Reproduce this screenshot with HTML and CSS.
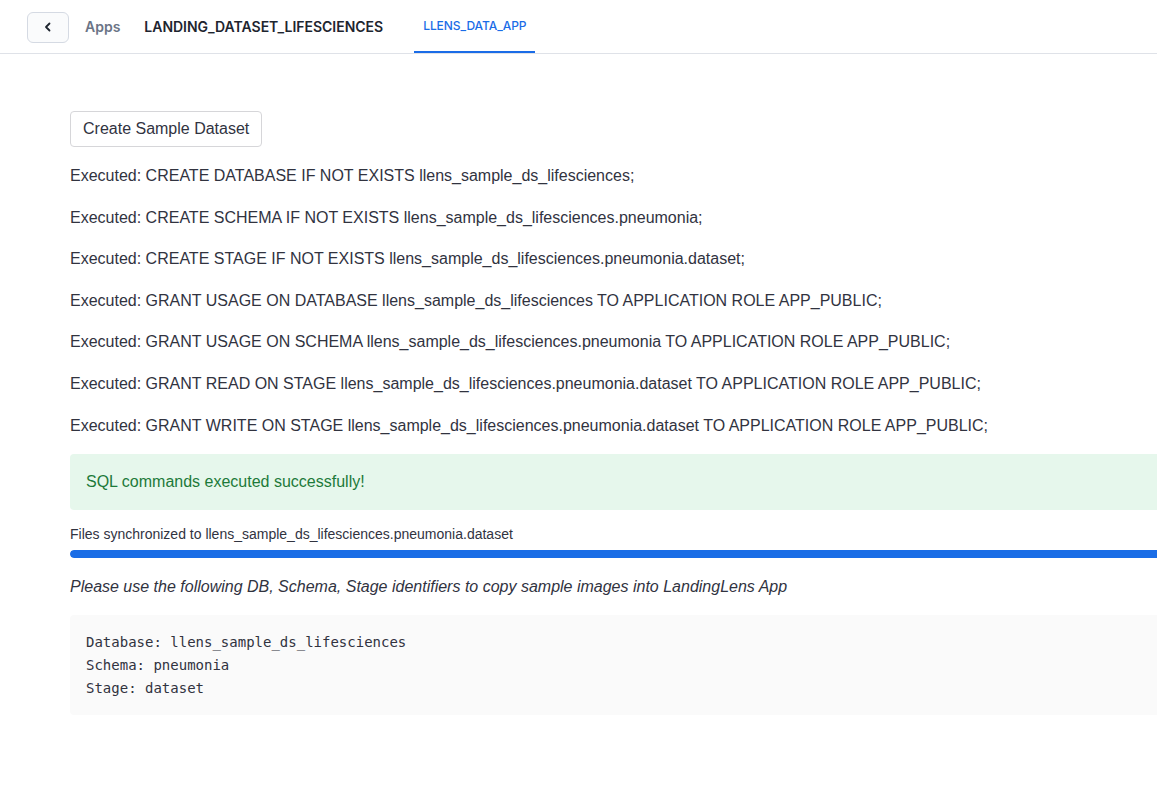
FILE: index.html
```html
<!DOCTYPE html>
<html>
<head>
<meta charset="utf-8">
<link rel="stylesheet" href="styles.css">
</head>
<body>
<header class="topbar">
  <button class="back-btn" aria-label="Back">
    <svg width="10" height="10" viewBox="0 0 10 10"><path d="M6.5 1.5 L3 5 L6.5 8.5" fill="none" stroke="#1e252f" stroke-width="1.8" stroke-linecap="round" stroke-linejoin="round"/></svg>
  </button>
  <span class="crumb">Apps</span>
  <span class="crumb-title">LANDING_DATASET_LIFESCIENCES</span>
  <nav class="tabs">
    <span class="tab active">LLENS_DATA_APP</span>
  </nav>
</header>
<main class="main">
  <div class="block">
    <div class="btn-row"><button class="st-btn">Create Sample Dataset</button></div>
    <p class="line">Executed: CREATE DATABASE IF NOT EXISTS llens_sample_ds_lifesciences;</p>
    <p class="line">Executed: CREATE SCHEMA IF NOT EXISTS llens_sample_ds_lifesciences.pneumonia;</p>
    <p class="line">Executed: CREATE STAGE IF NOT EXISTS llens_sample_ds_lifesciences.pneumonia.dataset;</p>
    <p class="line">Executed: GRANT USAGE ON DATABASE llens_sample_ds_lifesciences TO APPLICATION ROLE APP_PUBLIC;</p>
    <p class="line">Executed: GRANT USAGE ON SCHEMA llens_sample_ds_lifesciences.pneumonia TO APPLICATION ROLE APP_PUBLIC;</p>
    <p class="line">Executed: GRANT READ ON STAGE llens_sample_ds_lifesciences.pneumonia.dataset TO APPLICATION ROLE APP_PUBLIC;</p>
    <p class="line">Executed: GRANT WRITE ON STAGE llens_sample_ds_lifesciences.pneumonia.dataset TO APPLICATION ROLE APP_PUBLIC;</p>
    <div class="alert-success">SQL commands executed successfully!</div>
    <div class="progress">
      <div class="progress-label">Files synchronized to llens_sample_ds_lifesciences.pneumonia.dataset</div>
      <div class="progress-track"><div class="progress-fill" style="width:100%"></div></div>
    </div>
    <p class="line italic">Please use the following DB, Schema, Stage identifiers to copy sample images into LandingLens App</p>
    <pre class="code">Database: llens_sample_ds_lifesciences
Schema: pneumonia
Stage: dataset</pre>
  </div>
</main>
</body>
</html>
```
FILE: styles.css
```css
html, body {
  margin: 0;
  padding: 0;
  background: #ffffff;
  overflow: hidden;
}
body {
  width: 1157px;
  height: 787px;
  font-family: "Liberation Sans", Arial, sans-serif;
  color: #31333f;
}
.topbar {
  height: 53px;
  border-bottom: 1px solid #dfe2e8;
  display: flex;
  align-items: center;
  padding-left: 27px;
  font-family: Inter, "Noto Sans", sans-serif;
  box-sizing: content-box;
}
.back-btn {
  width: 42px;
  height: 31px;
  box-sizing: border-box;
  border: 1px solid #d5dae3;
  border-radius: 6px;
  background: #fafbfc;
  display: flex;
  align-items: center;
  justify-content: center;
  padding: 0;
  margin-top: 1px;
}
.crumb {
  margin-left: 16px;
  font-size: 14px;
  font-weight: 600;
  color: #6b7486;
}
.crumb-title {
  margin-left: 24px;
  font-size: 14px;
  font-weight: 600;
  color: #1e252f;
  letter-spacing: -0.02px;
}
.tabs {
  margin-left: 31px;
  align-self: stretch;
  display: flex;
}
.tab {
  display: flex;
  align-items: center;
  padding: 0 8px 2px 9px;
  font-size: 12px;
  font-weight: 500;
  letter-spacing: -0.05px;
  color: #1a6ce7;
  position: relative;
  top: 1px;
  border-bottom: 2px solid #1a6ce7;
  height: 52px;
  box-sizing: border-box;
}
.main {
  padding: 57px 0 0 70px;
}
.block {
  width: 1140px;
  display: flex;
  flex-direction: column;
  gap: 16px;
}
.btn-row { display: flex; }
.st-btn {
  font-family: "Liberation Sans", Arial, sans-serif;
  font-size: 16px;
  color: #31333f;
  background: #ffffff;
  border: 1px solid #d6d6d9;
  border-radius: 4px;
  height: 36px;
  padding: 0 12px;
  line-height: 1.6;
}
.line {
  margin: 0;
  font-size: 16px;
  line-height: 25.6px;
}
.italic { font-style: italic; }
.alert-success {
  background: #e6f7ec;
  color: #1d7a3a;
  border-radius: 4px;
  padding: 15px 16px 15px 16px;
  font-size: 16px;
  line-height: 25.6px;
}
.progress-label {
  font-size: 14px;
  line-height: 18px;
  margin-top: -1px;
}
.progress-track {
  margin-top: 7px;
  height: 8px;
  border-radius: 4px;
  background: #f0f2f6;
  overflow: hidden;
}
.progress-fill {
  height: 100%;
  background: #1a6de6;
  border-radius: 4px;
}
.code {
  margin: 0;
  background: #fafafa;
  border-radius: 4px;
  padding: 16px 16px 16px;
  font-family: "DejaVu Sans Mono", monospace;
  font-size: 14px;
  line-height: 23px;
  color: #31333f;
  height: 100px;
  box-sizing: border-box;
}
```
